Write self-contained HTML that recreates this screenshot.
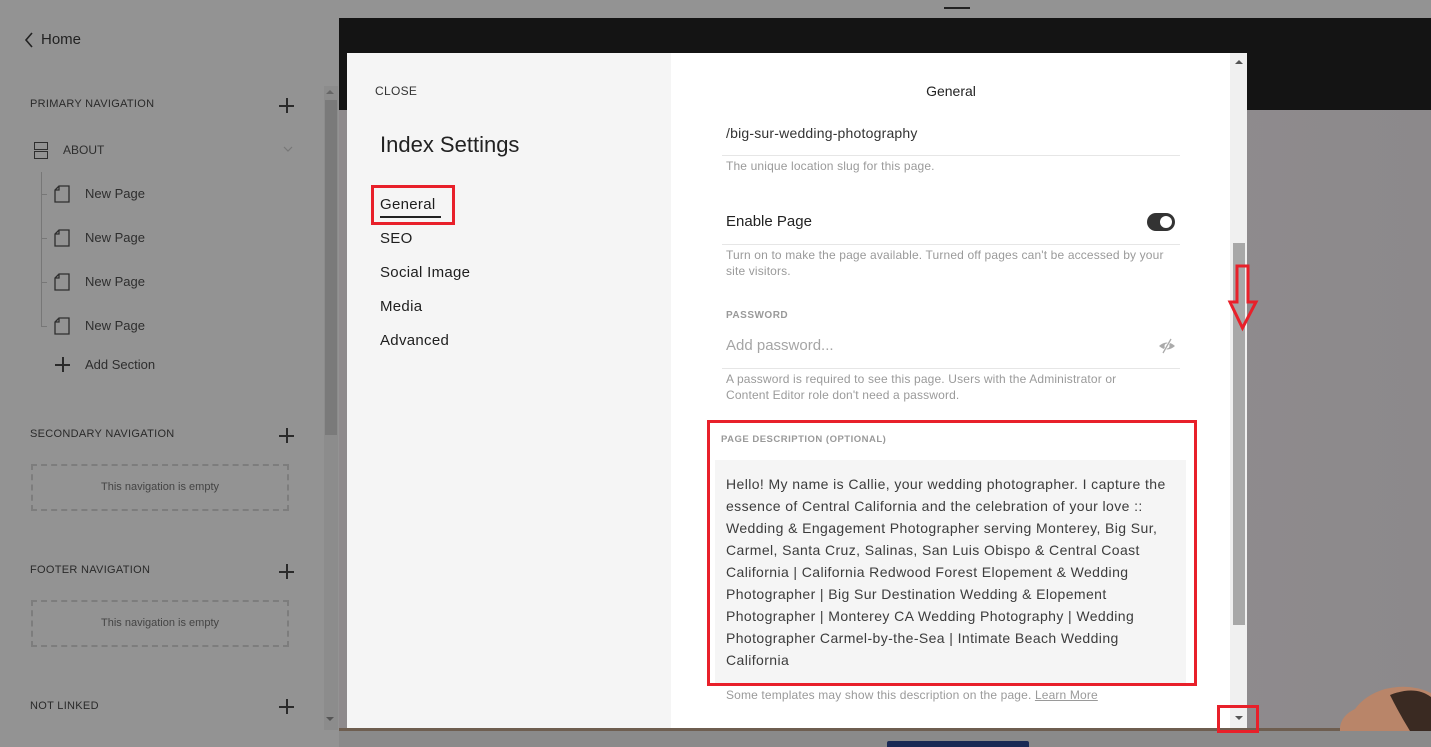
<!DOCTYPE html>
<html><head><meta charset="utf-8"><style>
*{margin:0;padding:0;box-sizing:border-box}
body{width:1431px;height:747px;overflow:hidden;background:#939393;font-family:"Liberation Sans",sans-serif;position:relative}
.a{position:absolute}
.sb{color:#2a2a2a;font-size:11px;letter-spacing:.3px}
.plus{position:absolute;width:15px;height:15px}
.plus:before{content:"";position:absolute;left:7px;top:0;width:1.5px;height:15px;background:#2a2a2a}
.plus:after{content:"";position:absolute;top:7px;left:0;height:1.5px;width:15px;background:#2a2a2a}
.np{position:absolute;left:85px;font-size:13px;color:#2e2e2e}
.nav{position:absolute;left:380px;font-size:15px;color:#1e1e1e;letter-spacing:.3px}
.hint{position:absolute;left:726px;font-size:12px;color:#9a9a9a;line-height:16px;letter-spacing:.15px}
.line{position:absolute;left:722px;width:458px;height:1px;background:#e6e6e6}
.empty{position:absolute;left:31px;width:258px;height:47px;border:2px dashed #7d7d7d;font-size:11px;color:#444;text-align:center;line-height:43px}
</style></head><body>
<svg class="a" style="left:24px;top:32px" width="10" height="16"><path d="M8 1 L2 8 L8 15" stroke="#222" stroke-width="1.6" fill="none"/></svg>
<div class="a" style="left:41px;top:31px;font-size:15px;color:#222">Home</div>
<div class="a sb" style="left:30px;top:98px">PRIMARY NAVIGATION</div>
<div class="plus" style="left:279px;top:98px"></div>
<div class="a" style="left:34px;top:142px;width:14px;height:8px;border:1.3px solid #2e2e2e"></div>
<div class="a" style="left:34px;top:151px;width:14px;height:8px;border:1.3px solid #2e2e2e"></div>
<div class="a" style="left:63px;top:143px;font-size:12px;color:#2e2e2e">ABOUT</div>
<svg class="a" style="left:283px;top:146px" width="10" height="7"><path d="M1 1 L5 5 L9 1" stroke="#777" stroke-width="1.2" fill="none"/></svg>
<div class="a" style="left:41px;top:172px;width:1px;height:154px;background:#777"></div>
<div class="a" style="left:41px;top:194px;width:6px;height:1px;background:#777"></div>
<div class="a" style="left:41px;top:238px;width:6px;height:1px;background:#777"></div>
<div class="a" style="left:41px;top:282px;width:6px;height:1px;background:#777"></div>
<div class="a" style="left:41px;top:326px;width:6px;height:1px;background:#777"></div>
<svg class="a" style="left:54px;top:185px" width="17" height="150"><g fill="none" stroke="#2e2e2e" stroke-width="1.3"><path d="M5 1 H15 V17 H1 V5 Z M1 5 H5 V1"/><path transform="translate(0,44)" d="M5 1 H15 V17 H1 V5 Z M1 5 H5 V1"/><path transform="translate(0,88)" d="M5 1 H15 V17 H1 V5 Z M1 5 H5 V1"/><path transform="translate(0,132)" d="M5 1 H15 V17 H1 V5 Z M1 5 H5 V1"/></g></svg>
<div class="np" style="top:186px">New Page</div>
<div class="np" style="top:230px">New Page</div>
<div class="np" style="top:274px">New Page</div>
<div class="np" style="top:318px">New Page</div>
<div class="plus" style="left:55px;top:357px"></div>
<div class="np" style="top:357px">Add Section</div>
<div class="a sb" style="left:30px;top:428px">SECONDARY NAVIGATION</div>
<div class="plus" style="left:279px;top:428px"></div>
<div class="empty" style="top:464px">This navigation is empty</div>
<div class="a sb" style="left:30px;top:564px">FOOTER NAVIGATION</div>
<div class="plus" style="left:279px;top:564px"></div>
<div class="empty" style="top:600px">This navigation is empty</div>
<div class="a sb" style="left:30px;top:700px">NOT LINKED</div>
<div class="plus" style="left:279px;top:699px"></div>
<div class="a" style="left:324px;top:86px;width:14px;height:644px;background:#8c8c8c"></div>
<div class="a" style="left:325px;top:100px;width:12px;height:335px;background:#7a7a7a"></div>
<div class="a" style="left:326px;top:90px;width:0;height:0;border:4px solid transparent;border-bottom-color:#666;border-top:0"></div>
<div class="a" style="left:326px;top:717px;width:0;height:0;border:4px solid transparent;border-top-color:#555;border-bottom:0"></div>
<div class="a" style="left:339px;top:18px;width:1092px;height:92px;background:#141414"></div>
<div class="a" style="left:944px;top:7px;width:26px;height:2px;background:#222"></div>
<div class="a" style="left:339px;top:110px;width:1092px;height:620px;background:linear-gradient(90deg,#8e8a8c,#918d90 60%,#8c898b)"></div>
<div class="a" style="left:339px;top:728px;width:1092px;height:3px;background:#6e5e50"></div>
<svg class="a" style="left:1330px;top:675px" width="101" height="56"><path d="M10 52 Q12 40 25 34 Q35 20 55 14 Q80 8 101 18 V56 H10Z" fill="#b98569"/><path d="M60 20 Q85 10 101 22 V56 H80 Q70 40 60 20Z" fill="#3a2a22"/></svg>
<div class="a" style="left:339px;top:731px;width:1092px;height:16px;background:#8a8a8a"></div>
<div class="a" style="left:887px;top:741px;width:142px;height:6px;background:#1a2a55;border-radius:2px 2px 0 0"></div>
<div class="a" style="left:347px;top:53px;width:324px;height:675px;background:#f5f5f5"></div>
<div class="a" style="left:671px;top:53px;width:560px;height:675px;background:#fff"></div>
<div class="a" style="left:1230px;top:53px;width:17px;height:675px;background:#f0f0f0"></div>
<div class="a" style="left:1233px;top:243px;width:12px;height:382px;background:#a8a8a8"></div>
<div class="a" style="left:1235px;top:60px;width:0;height:0;border:4px solid transparent;border-bottom-color:#555;border-top:0"></div>
<div class="a" style="left:1235px;top:716px;width:0;height:0;border:4px solid transparent;border-top-color:#555;border-bottom:0"></div>
<div class="a" style="left:375px;top:84px;font-size:12px;color:#333;letter-spacing:.3px">CLOSE</div>
<div class="a" style="left:380px;top:132px;font-size:22px;color:#222">Index Settings</div>
<div class="nav" style="top:196px">General</div>
<div class="a" style="left:380px;top:216px;width:61px;height:2px;background:#222"></div>
<div class="nav" style="top:230px">SEO</div>
<div class="nav" style="top:264px">Social Image</div>
<div class="nav" style="top:298px">Media</div>
<div class="nav" style="top:332px">Advanced</div>
<div class="a" style="left:371px;top:185px;width:84px;height:40px;border:3px solid #e8202a"></div>
<div class="a" style="left:671px;top:83px;width:576px;text-align:center;font-size:14px;color:#222;padding-right:16px">General</div>
<div class="a" style="left:726px;top:128px;height:14px;overflow:hidden;width:300px"><div style="font-size:14px;color:#333;line-height:14px;margin-top:-2px;letter-spacing:.2px">/big-sur-wedding-photography</div></div>
<div class="line" style="top:155px"></div>
<div class="hint" style="top:158px">The unique location slug for this page.</div>
<div class="a" style="left:726px;top:213px;font-size:15px;color:#222">Enable Page</div>
<div class="a" style="left:1147px;top:213px;width:28px;height:18px;border-radius:9px;background:#333"></div>
<div class="a" style="left:1160px;top:216px;width:12px;height:12px;border-radius:6px;background:#fff"></div>
<div class="line" style="top:244px"></div>
<div class="hint" style="top:247px">Turn on to make the page available. Turned off pages can't be accessed by your<br>site visitors.</div>
<div class="a" style="left:726px;top:310px;font-size:10px;color:#999;font-weight:bold;letter-spacing:.5px">PASSWORD</div>
<div class="a" style="left:726px;top:337px;font-size:15px;color:#a5a5a5">Add password...</div>
<svg class="a" style="left:1158px;top:337px" width="18" height="18"><path d="M1 9 Q9 2 17 9 Q9 16 1 9Z" fill="#aaa"/><circle cx="9" cy="9" r="2.5" fill="#fff"/><path d="M13 2 L5 16" stroke="#fff" stroke-width="2.5"/><path d="M13 2 L5 16" stroke="#aaa" stroke-width="1.3"/></svg>
<div class="line" style="top:368px"></div>
<div class="hint" style="top:371px">A password is required to see this page. Users with the Administrator or<br>Content Editor role don't need a password.</div>
<div class="a" style="left:721px;top:434px;font-size:9.5px;color:#999;font-weight:bold;letter-spacing:.5px">PAGE DESCRIPTION (OPTIONAL)</div>
<div class="a" style="left:715px;top:460px;width:471px;height:224px;background:#f5f5f5"></div>
<div class="a" style="left:726px;top:473px;font-size:14px;color:#3c3c3c;line-height:22px;white-space:nowrap;letter-spacing:.4px">Hello! My name is Callie, your wedding photographer. I capture the<br>essence of Central California and the celebration of your love ::<br>Wedding &amp; Engagement Photographer serving Monterey, Big Sur,<br>Carmel, Santa Cruz, Salinas, San Luis Obispo &amp; Central Coast<br>California | California Redwood Forest Elopement &amp; Wedding<br>Photographer | Big Sur Destination Wedding &amp; Elopement<br>Photographer | Monterey CA Wedding Photography | Wedding<br>Photographer Carmel-by-the-Sea | Intimate Beach Wedding<br>California</div>
<div class="a" style="left:707px;top:420px;width:490px;height:266px;border:3px solid #e8202a"></div>
<div class="hint" style="top:687px">Some templates may show this description on the page. <span style="text-decoration:underline">Learn More</span></div>
<div class="a" style="left:1217px;top:705px;width:42px;height:28px;border:3px solid #e8202a"></div>
<svg class="a" style="left:1227px;top:264px" width="32" height="68"><path d="M10 2 H21 V38 H29 L15.5 64 L3 38 H10 Z" fill="none" stroke="#e8202a" stroke-width="3"/></svg>
</body></html>
